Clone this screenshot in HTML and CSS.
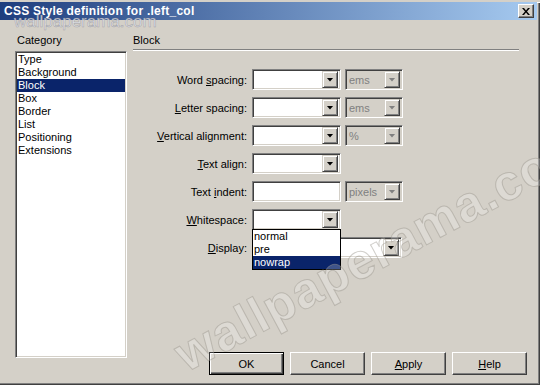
FILE: index.html
```html
<!DOCTYPE html>
<html lang="en">
<head>
    <meta charset="UTF-8">
    <title>CSS Style definition</title>
    <link rel="stylesheet" href="styles.css">
</head>
<body>

    <div class="window">
        <div class="titlebar">
            <span class="title">CSS Style definition for .left_col</span>
            <span class="close">
                <svg width="8" height="7" viewBox="0 0 8 7"><path d="M0 0h2l2 2.5L6 0h2L5 3.5 8 7H6L4 4.5 2 7H0l3-3.5z" fill="#000"/></svg>
            </span>
        </div>

        <div class="content">
            <div class="category">
                <div class="caption">Category</div>
                <ul class="listbox">
                    <li>Type</li>
                    <li>Background</li>
                    <li class="selected">Block</li>
                    <li>Box</li>
                    <li>Border</li>
                    <li>List</li>
                    <li>Positioning</li>
                    <li>Extensions</li>
                </ul>
            </div>

            <div class="panel">
                <div class="caption">Block</div>
                <div class="rule"></div>

                <div class="form">
                    <label>Word <u>s</u>pacing:</label>
                    <div class="controls">
                        <span class="combo"><span class="arrow"></span></span>
                        <span class="combo unit disabled">ems<span class="arrow"></span></span>
                    </div>

                    <label><u>L</u>etter spacing:</label>
                    <div class="controls">
                        <span class="combo"><span class="arrow"></span></span>
                        <span class="combo unit disabled">ems<span class="arrow"></span></span>
                    </div>

                    <label><u>V</u>ertical alignment:</label>
                    <div class="controls">
                        <span class="combo"><span class="arrow"></span></span>
                        <span class="combo unit disabled">%<span class="arrow"></span></span>
                    </div>

                    <label><u>T</u>ext align:</label>
                    <div class="controls">
                        <span class="combo"><span class="arrow"></span></span>
                    </div>

                    <label>Text <u>i</u>ndent:</label>
                    <div class="controls">
                        <span class="combo field"></span>
                        <span class="combo unit disabled">pixels<span class="arrow"></span></span>
                    </div>

                    <label><u>W</u>hitespace:</label>
                    <div class="controls">
                        <span class="combo"><span class="arrow"></span></span>
                        <ul class="dropdown">
                            <li>normal</li>
                            <li>pre</li>
                            <li class="selected">nowrap</li>
                        </ul>
                    </div>

                    <label><u>D</u>isplay:</label>
                    <div class="controls">
                        <span class="combo wide"><span class="arrow"></span></span>
                    </div>
                </div>

                <div class="buttons">
                    <button class="default">OK</button>
                    <button>Cancel</button>
                    <button><u>A</u>pply</button>
                    <button><u>H</u>elp</button>
                </div>
            </div>
        </div>

        <div class="wm-title">wallpaperama.com</div>
        <div class="wm-big">wallpaperama.com</div>
    </div>

</body>
</html>
```

FILE: styles.css
```css
/* Dialog frame */
body {
    margin: 0;
    font-family: "Liberation Sans", Arial, sans-serif;
    font-size: 11px;
    color: #000;
}

.window {
    position: relative;
    width: 540px;
    height: 385px;
    box-sizing: border-box;
    border-top: 2px solid #d4d0c8;
    background-color: #d4d0c8;
    display: flex;
    flex-direction: column;
    overflow: hidden;
    box-shadow: inset 0 1px #fff, inset -1px -1px #404040, inset -2px -2px #808080;
}

.titlebar {
    height: 18px;
    margin-right: 3px;
    padding: 0 3px 0 4px;
    display: flex;
    align-items: center;
    justify-content: space-between;
    background: linear-gradient(to right, #1e3e7e, #a6caf0);
}

.title {
    color: #fff;
    font-size: 12px;
    font-weight: bold;
    letter-spacing: 0.25px;
}

.close {
    width: 16px;
    height: 14px;
    box-sizing: border-box;
    display: flex;
    align-items: center;
    justify-content: center;
    background-color: #d4d0c8;
    border: 1px solid;
    border-color: #fff #404040 #404040 #fff;
    box-shadow: inset -1px -1px #808080;
}

/* Body */
.content {
    flex: 1;
    display: flex;
    gap: 6px;
    padding: 14px 13px 10px 15px;
}

.caption {
    height: 13px;
    line-height: 13px;
    padding-left: 2px;
}

.category {
    width: 112px;
}

.listbox {
    list-style: none;
    margin: 4px 0 0;
    padding: 0 1px;
    height: 307px;
    box-sizing: border-box;
    background-color: #fff;
    border: 1px solid;
    border-color: #808080 #fff #fff #808080;
    box-shadow: inset 1px 1px #404040, inset -1px -1px #d4d0c8;
}

.listbox li, .dropdown li {
    height: 13px;
    line-height: 13px;
    padding-left: 1px;
}

.listbox li:first-child {
    margin-top: 1px;
}

.selected {
    background-color: #0a246a;
    color: #fff;
}

.panel {
    flex: 1;
    display: flex;
    flex-direction: column;
}

.panel .caption {
    padding-left: 0;
}

.rule {
    margin: 2px 8px 0 0;
    border-top: 1px solid #808080;
    border-bottom: 1px solid #fff;
}

/* Form rows */
.form {
    margin-top: 18px;
    display: grid;
    grid-template-columns: 114px auto;
    grid-auto-rows: 21px;
    column-gap: 5px;
    row-gap: 7px;
    justify-content: start;
    align-items: center;
}

.form label {
    text-align: right;
}

.controls {
    position: relative;
    display: flex;
    gap: 4px;
}

.combo {
    width: 89px;
    height: 21px;
    box-sizing: border-box;
    padding: 2px 2px 2px 3px;
    display: flex;
    align-items: center;
    justify-content: space-between;
    background-color: #fff;
    border: 1px solid;
    border-color: #808080 #fff #fff #808080;
    box-shadow: inset 1px 1px #404040, inset -1px -1px #d4d0c8;
}

.combo .arrow {
    margin-left: auto;
}

.combo.unit {
    width: 58px;
}

.combo.wide {
    width: 150px;
}

.combo.disabled {
    background-color: #d4d0c8;
    color: #808080;
}

.arrow {
    width: 16px;
    height: 17px;
    box-sizing: border-box;
    display: flex;
    align-items: center;
    justify-content: center;
    background-color: #d4d0c8;
    border: 1px solid;
    border-color: #d4d0c8 #404040 #404040 #d4d0c8;
    box-shadow: inset 1px 1px #fff, inset -1px -1px #808080;
}

.arrow::after {
    content: "";
    width: 7px;
    height: 4px;
    background-color: #000;
    clip-path: polygon(0 0, 100% 0, 50% 100%);
}

.disabled .arrow::after {
    background-color: #808080;
}

.dropdown {
    position: absolute;
    left: 0;
    top: 20px;
    z-index: 2;
    list-style: none;
    margin: 0;
    padding: 0;
    width: 89px;
    box-sizing: border-box;
    background-color: #fff;
    border: 1px solid #000;
}

/* Buttons */
.buttons {
    margin-top: auto;
    display: flex;
    justify-content: flex-end;
    gap: 6px;
}

.buttons button {
    width: 75px;
    height: 23px;
    padding: 0;
    font: inherit;
    color: #000;
    background-color: #d4d0c8;
    border: 1px solid;
    border-color: #fff #404040 #404040 #fff;
    box-shadow: inset -1px -1px #808080;
}

.buttons button.default {
    border-color: #000;
    box-shadow: inset 1px 1px #fff, inset -1px -1px #404040, inset -2px -2px #808080;
}

/* Watermarks */
.wm-title {
    position: absolute;
    left: 14px;
    top: 10px;
    font-size: 17px;
    color: rgba(225, 228, 236, 0.85);
    -webkit-text-stroke: 0.5px rgba(120, 120, 130, 0.6);
    pointer-events: none;
}

.wm-big {
    position: absolute;
    left: 165px;
    top: 330px;
    transform-origin: left top;
    transform: rotate(-28deg);
    font-size: 50px;
    font-weight: bold;
    letter-spacing: 1px;
    white-space: nowrap;
    color: rgba(255, 255, 255, 0.22);
    -webkit-text-stroke: 1px rgba(150, 146, 138, 0.45);
    pointer-events: none;
    z-index: 3;
}
```
